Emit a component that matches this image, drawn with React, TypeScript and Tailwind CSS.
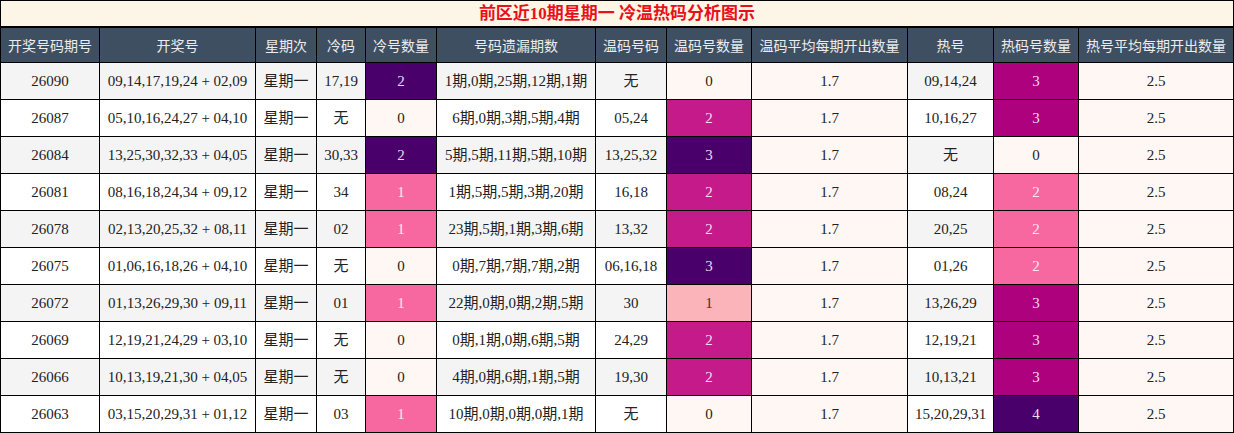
const headers = [
  '开奖号码期号',
  '开奖号',
  '星期次',
  '冷码',
  '冷号数量',
  '号码遗漏期数',
  '温码号码',
  '温码号数量',
  '温码平均每期开出数量',
  '热号',
  '热码号数量',
  '热号平均每期开出数量',
]

type Row = [string, string, string, string, number, string, string, number, string, string, number, string]

const rows: Row[] = [
  ['26090', '09,14,17,19,24 + 02,09', '星期一', '17,19', 2, '1期,0期,25期,12期,1期', '无', 0, '1.7', '09,14,24', 3, '2.5'],
  ['26087', '05,10,16,24,27 + 04,10', '星期一', '无', 0, '6期,0期,3期,5期,4期', '05,24', 2, '1.7', '10,16,27', 3, '2.5'],
  ['26084', '13,25,30,32,33 + 04,05', '星期一', '30,33', 2, '5期,5期,11期,5期,10期', '13,25,32', 3, '1.7', '无', 0, '2.5'],
  ['26081', '08,16,18,24,34 + 09,12', '星期一', '34', 1, '1期,5期,5期,3期,20期', '16,18', 2, '1.7', '08,24', 2, '2.5'],
  ['26078', '02,13,20,25,32 + 08,11', '星期一', '02', 1, '23期,5期,1期,3期,6期', '13,32', 2, '1.7', '20,25', 2, '2.5'],
  ['26075', '01,06,16,18,26 + 04,10', '星期一', '无', 0, '0期,7期,7期,7期,2期', '06,16,18', 3, '1.7', '01,26', 2, '2.5'],
  ['26072', '01,13,26,29,30 + 09,11', '星期一', '01', 1, '22期,0期,0期,2期,5期', '30', 1, '1.7', '13,26,29', 3, '2.5'],
  ['26069', '12,19,21,24,29 + 03,10', '星期一', '无', 0, '0期,1期,0期,6期,5期', '24,29', 2, '1.7', '12,19,21', 3, '2.5'],
  ['26066', '10,13,19,21,30 + 04,05', '星期一', '无', 0, '4期,0期,6期,1期,5期', '19,30', 2, '1.7', '10,13,21', 3, '2.5'],
  ['26063', '03,15,20,29,31 + 01,12', '星期一', '03', 1, '10期,0期,0期,0期,1期', '无', 0, '1.7', '15,20,29,31', 4, '2.5'],
]

// heat colours per count column
const coldColor: Record<number, string> = {
  0: 'bg-[#fff7f3] text-[#222]',
  1: 'bg-[#f768a1] text-[#fbe9f1]',
  2: 'bg-[#49006a] text-[#e9dcef]',
}
const warmColor: Record<number, string> = {
  0: 'bg-[#fff7f3] text-[#222]',
  1: 'bg-[#fbb4b9] text-[#333]',
  2: 'bg-[#c51b8a] text-[#f6dcec]',
  3: 'bg-[#49006a] text-[#e9dcef]',
}
const hotColor: Record<number, string> = {
  0: 'bg-[#fff7f3] text-[#222]',
  2: 'bg-[#f768a1] text-[#fbe9f1]',
  3: 'bg-[#ae017e] text-[#f4d6ea]',
  4: 'bg-[#49006a] text-[#e9dcef]',
}

const cell = 'flex items-center justify-center border-r border-black last:border-r-0'

const App = () => {
  return (
    <div className="w-[1234px] h-[433px] border border-black bg-white font-['Liberation_Serif','Noto_Sans_CJK_SC',serif] text-[15px] text-[#222]">
      {/* Title */}
      <div className="h-[27px] border-b-2 border-black bg-[#fdf5e6] flex items-center justify-center text-[17px] font-bold text-[#e8101a] leading-none">
        前区近10期星期一 冷温热码分析图示
      </div>

      {/* Header */}
      <div className="grid grid-cols-[99px_156px_61px_49px_71px_159px_71px_85px_156px_86px_85px_154px] h-[35px] border-b border-black bg-[#3f4f62] text-[14px] text-[#ececec] font-['Noto_Sans_CJK_SC',sans-serif]">
        {headers.map((h) => (
          <div key={h} className={cell}>
            {h}
          </div>
        ))}
      </div>

      {/* Body */}
      {rows.map((r, i) => {
        const base = i % 2 === 0 ? 'bg-[#f4f4f4]' : 'bg-white'
        const light = 'bg-[#fff7f3]'
        return (
          <div
            key={r[0]}
            className={`grid grid-cols-[99px_156px_61px_49px_71px_159px_71px_85px_156px_86px_85px_154px] ${i < rows.length - 1 ? 'h-[37px] border-b border-black' : 'h-[36px]'}`}
          >
            <div className={`${cell} ${base}`}>{r[0]}</div>
            <div className={`${cell} ${base}`}>{r[1]}</div>
            <div className={`${cell} ${base}`}>{r[2]}</div>
            <div className={`${cell} ${base}`}>{r[3]}</div>
            <div className={`${cell} ${coldColor[r[4]]}`}>{r[4]}</div>
            <div className={`${cell} ${base}`}>{r[5]}</div>
            <div className={`${cell} ${base}`}>{r[6]}</div>
            <div className={`${cell} ${warmColor[r[7]]}`}>{r[7]}</div>
            <div className={`${cell} ${light}`}>{r[8]}</div>
            <div className={`${cell} ${base}`}>{r[9]}</div>
            <div className={`${cell} ${hotColor[r[10]]}`}>{r[10]}</div>
            <div className={`${cell} ${light}`}>{r[11]}</div>
          </div>
        )
      })}
    </div>
  )
}

export default App
